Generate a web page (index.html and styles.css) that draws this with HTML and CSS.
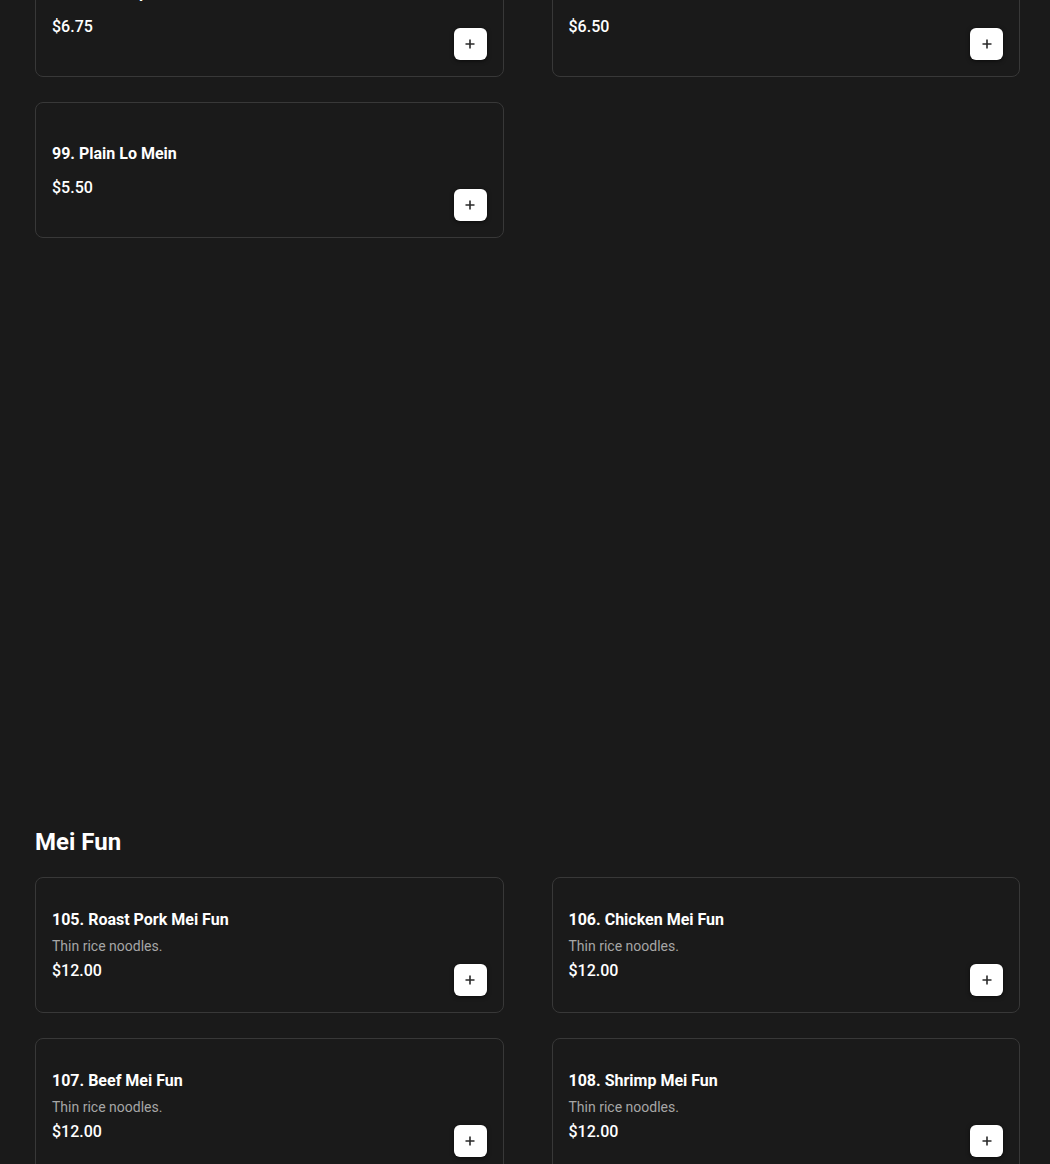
FILE: index.html
```html
<!DOCTYPE html>
<html lang="en">
<head>
<meta charset="utf-8">
<title>Menu</title>
<link rel="stylesheet" href="styles.css">
</head>
<body>
<main class="menu">
  <section class="section section--lo-mein">
    <div class="grid">
      <article class="card">
        <div class="card-body">
          <h3 class="item-title item-title--solo">97. House Special Lo Mein</h3>
          <p class="item-price">$6.75</p>
        </div>
        <button class="add-btn" aria-label="Add"><svg viewBox="0 0 12 12" width="12" height="12"><path d="M6 1.5v9M1.5 6h9" stroke="#2a2a2a" stroke-width="1.6" fill="none"/></svg></button>
      </article>
      <article class="card">
        <div class="card-body">
          <h3 class="item-title item-title--solo">98. Roast Pork Lo Mein</h3>
          <p class="item-price">$6.50</p>
        </div>
        <button class="add-btn" aria-label="Add"><svg viewBox="0 0 12 12" width="12" height="12"><path d="M6 1.5v9M1.5 6h9" stroke="#2a2a2a" stroke-width="1.6" fill="none"/></svg></button>
      </article>
      <article class="card">
        <div class="card-body">
          <h3 class="item-title item-title--solo">99. Plain Lo Mein</h3>
          <p class="item-price">$5.50</p>
        </div>
        <button class="add-btn" aria-label="Add"><svg viewBox="0 0 12 12" width="12" height="12"><path d="M6 1.5v9M1.5 6h9" stroke="#2a2a2a" stroke-width="1.6" fill="none"/></svg></button>
      </article>
    </div>
  </section>

  <section class="section section--mei-fun">
    <h2 class="section-title">Mei Fun</h2>
    <div class="grid">
      <article class="card">
        <div class="card-body">
          <h3 class="item-title">105. Roast Pork Mei Fun</h3>
          <p class="item-desc">Thin rice noodles.</p>
          <p class="item-price">$12.00</p>
        </div>
        <button class="add-btn" aria-label="Add"><svg viewBox="0 0 12 12" width="12" height="12"><path d="M6 1.5v9M1.5 6h9" stroke="#2a2a2a" stroke-width="1.6" fill="none"/></svg></button>
      </article>
      <article class="card">
        <div class="card-body">
          <h3 class="item-title">106. Chicken Mei Fun</h3>
          <p class="item-desc">Thin rice noodles.</p>
          <p class="item-price">$12.00</p>
        </div>
        <button class="add-btn" aria-label="Add"><svg viewBox="0 0 12 12" width="12" height="12"><path d="M6 1.5v9M1.5 6h9" stroke="#2a2a2a" stroke-width="1.6" fill="none"/></svg></button>
      </article>
      <article class="card">
        <div class="card-body">
          <h3 class="item-title">107. Beef Mei Fun</h3>
          <p class="item-desc">Thin rice noodles.</p>
          <p class="item-price">$12.00</p>
        </div>
        <button class="add-btn" aria-label="Add"><svg viewBox="0 0 12 12" width="12" height="12"><path d="M6 1.5v9M1.5 6h9" stroke="#2a2a2a" stroke-width="1.6" fill="none"/></svg></button>
      </article>
      <article class="card">
        <div class="card-body">
          <h3 class="item-title">108. Shrimp Mei Fun</h3>
          <p class="item-desc">Thin rice noodles.</p>
          <p class="item-price">$12.00</p>
        </div>
        <button class="add-btn" aria-label="Add"><svg viewBox="0 0 12 12" width="12" height="12"><path d="M6 1.5v9M1.5 6h9" stroke="#2a2a2a" stroke-width="1.6" fill="none"/></svg></button>
      </article>
    </div>
  </section>
</main>
</body>
</html>
```

FILE: styles.css
```css
* { box-sizing: border-box; }

html, body {
  margin: 0;
  background: #1a1a1a;
  color: #ffffff;
  font-family: Roboto, "Liberation Sans", Arial, sans-serif;
  overflow: hidden;
}

.menu {
  padding: 0 30px 0 35px;
  margin-top: -59px;
}

.grid {
  display: grid;
  grid-template-columns: 1fr 1fr;
  column-gap: 48px;
  row-gap: 25px;
}

.section--lo-mein {
  min-height: 885px;
}

.section-title {
  margin: 0 0 19px;
  font-size: 24px;
  line-height: 32px;
  font-weight: 700;
  color: #ffffff;
}

.card {
  height: 136px;
  border: 1px solid #383838;
  border-radius: 8px;
  background: #1a1a1a;
  padding: 0 16px 16px 16px;
  display: flex;
  align-items: center;
  justify-content: space-between;
}

.card-body {
  display: flex;
  flex-direction: column;
  padding-top: 16px;
}

.item-title {
  margin: 0 0 4px;
  font-size: 16px;
  line-height: 24px;
  font-weight: 700;
  color: #ffffff;
}

.item-title--solo {
  margin-top: 2px;
  margin-bottom: 10px;
}

.item-desc {
  margin: 0 0 3px;
  font-size: 14px;
  line-height: 20px;
  color: #a6a6a6;
}

.item-price {
  margin: 0;
  font-size: 16px;
  line-height: 24px;
  font-weight: 500;
  color: #ffffff;
}

.add-btn {
  align-self: flex-end;
  width: 33px;
  height: 32px;
  border: none;
  border-radius: 6px;
  background: #ffffff;
  box-shadow: 0 1px 4px rgba(0, 0, 0, 0.6);
  display: flex;
  align-items: center;
  justify-content: center;
  padding: 0;
  cursor: pointer;
}
```
